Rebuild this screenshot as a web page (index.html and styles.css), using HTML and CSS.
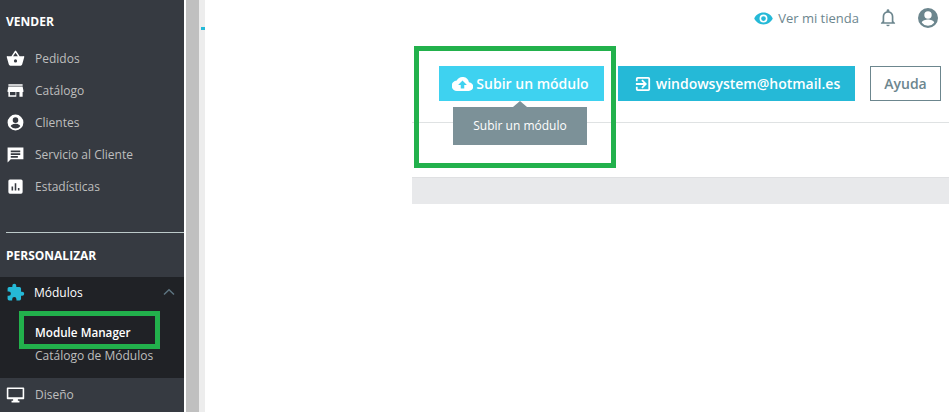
FILE: index.html
```html
<!DOCTYPE html>
<html lang="es">
<head>
<meta charset="utf-8">
<title>Module Manager</title>
<link rel="stylesheet" href="styles.css">
</head>
<body>
<div class="app">
  <aside class="sidebar">
    <h2 class="section-title first">VENDER</h2>
    <ul class="menu">
      <li class="menu-item"><svg class="icon" viewBox="0 0 24 24"><path d="M17.2 9 12.9 2.600a1 1 0 0 0-1.700 0L6.800 9H2a1 1 0 0 0-1 1.300l2.600 9.300A2 2 0 0 0 5.500 21h13a2 2 0 0 0 1.900-1.400l2.600-9.300A1 1 0 0 0 22 9zM9 9l3-4.400L15 9zm3 8a2 2 0 1 1 0-4 2 2 0 0 1 0 4z"/></svg><span>Pedidos</span></li>
      <li class="menu-item"><svg class="icon" viewBox="0 0 24 24"><path d="M21 4H3v2h18zM22 14v-2l-1-5H3l-1 5v2h1v6h10v-6h4v6h4v-6zM12 18H5v-4h7z"/></svg><span>Catálogo</span></li>
      <li class="menu-item"><svg class="icon" viewBox="0 0 24 24"><path d="M12 2a10 10 0 1 0 0 20 10 10 0 0 0 0-20zm0 3.500a3.500 3.500 0 1 1 0 7 3.500 3.500 0 0 1 0-7zm0 14.200a7.700 7.700 0 0 1-6-2.900c0-2 4-3.100 6-3.100s6 1.100 6 3.100a7.700 7.700 0 0 1-6 2.900z"/></svg><span>Clientes</span></li>
      <li class="menu-item"><svg class="icon" viewBox="0 0 24 24"><path d="M22 3H2v19l4-4h16zM6 7h12v2H6zm0 3.500h12v2H6zM15 16H6v-2h9z" fill-rule="evenodd"/></svg><span>Servicio al Cliente</span></li>
      <li class="menu-item"><svg class="icon" viewBox="0 0 24 24"><path d="M19 3H5a2 2 0 0 0-2 2v14a2 2 0 0 0 2 2h14a2 2 0 0 0 2-2V5a2 2 0 0 0-2-2zM9 17H7v-5h2zm4 0h-2V8h2zm4 0h-2v-3h2z"/></svg><span>Estadísticas</span></li>
    </ul>
    <hr class="divider">
    <h2 class="section-title">PERSONALIZAR</h2>
    <div class="open-group">
      <div class="menu-item active">
        <svg class="icon cyan" viewBox="0 0 24 24"><path d="M20.500 11H19V7a2 2 0 0 0-2-2h-4V3.500a2.500 2.500 0 0 0-5 0V5H4a2 2 0 0 0-2 2v3.800h1.500a2.700 2.700 0 0 1 0 5.400H2V20a2 2 0 0 0 2 2h3.800v-1.500a2.700 2.700 0 0 1 5.400 0V22H17a2 2 0 0 0 2-2v-4h1.500a2.500 2.500 0 0 0 0-5z"/></svg>
        <span>Módulos</span>
        <svg class="chevron" viewBox="0 0 12 8"><path d="M1 6.500 6 1.800l5 4.700" fill="none" stroke="currentColor" stroke-width="1.500"/></svg>
      </div>
      <a class="sub-item current">Module Manager</a>
      <a class="sub-item">Catálogo de Módulos</a>
    </div>
    <div class="menu-item last"><svg class="icon" viewBox="0 0 24 24"><path d="M22 3H2a1 1 0 0 0-1 1v13a1 1 0 0 0 1 1h7v2H7v2h10v-2h-2v-2h7a1 1 0 0 0 1-1V4a1 1 0 0 0-1-1zm-1 12.500H3V5h18z"/></svg><span>Diseño</span></div>
  </aside>
  <div class="gutter-light"></div>
  <div class="gutter-gray"></div>
  <div class="gutter-pale"><i class="tick"></i></div>
  <main class="main">
    <header class="topbar">
      <a class="shop-link">
        <svg class="eye" viewBox="0 0 24 16"><path d="M12 .5C6.500.5 2.200 3.700.3 8c1.900 4.300 6.200 7.500 11.700 7.500S21.800 12.300 23.700 8C21.800 3.700 17.500.5 12 .5zm0 12.500a5 5 0 1 1 0-10 5 5 0 0 1 0 10zm0-8a3 3 0 1 0 0 6 3 3 0 0 0 0-6z" fill-rule="evenodd"/></svg>
        <span>Ver mi tienda</span>
      </a>
      <svg class="bell" viewBox="0 0 24 24"><path d="M12 22a2 2 0 0 0 2-2h-4a2 2 0 0 0 2 2zm6.500-6V10.500c0-3.200-1.800-5.800-4.800-6.500v-.7a1.700 1.700 0 0 0-3.400 0V4c-3 .7-4.800 3.300-4.800 6.500V16L3.500 18v1h17v-1zm-2 1h-9v-6.500C7.500 7.800 9.300 5.800 12 5.800s4.500 2 4.500 4.700z"/></svg>
      <svg class="avatar" viewBox="0 0 24 24"><path d="M12 2a10 10 0 1 0 0 20 10 10 0 0 0 0-20zm0 3.300a3.700 3.700 0 1 1 0 7.400 3.700 3.700 0 0 1 0-7.400zm0 14.400a7.800 7.800 0 0 1-6.200-3c0-2.100 4.200-3.200 6.200-3.200s6.200 1.100 6.200 3.200a7.800 7.800 0 0 1-6.200 3z"/></svg>
    </header>
    <section class="page-head">
      <div class="toolbar">
        <button class="btn btn-upload">
          <svg class="btn-cloud" viewBox="0 0 24 18"><path d="M19.400 7A7.500 7.500 0 0 0 5.400 5 6 6 0 0 0 6 17h13a5 5 0 0 0 .4-10zM14 10v4h-4v-4H7l5-5 5 5z" fill-rule="evenodd"/></svg>Subir un módulo
          <span class="tooltip">Subir un módulo</span>
        </button>
        <button class="btn btn-account">
          <svg class="btn-login" viewBox="0 0 18 18"><path d="M3 1h12a2 2 0 0 1 2 2v12a2 2 0 0 1-2 2H3a2 2 0 0 1-2-2v-3h2v3h12V3H3v3H1V3a2 2 0 0 1 2-2zm4.100 11.600L8.500 14l5-5-5-5-1.400 1.400L9.700 8H1v2h8.700z"/></svg>windowsystem@hotmail.es
        </button>
        <button class="btn btn-help">Ayuda</button>
      </div>
    </section>
    <div class="band"></div>
  </main>
</div>
<div class="mark mark-upload"></div>
<div class="mark mark-manager"></div>
</body>
</html>
```
FILE: styles.css
```css
* { box-sizing: border-box; }
html, body { margin: 0; height: 100%; }
body {
  position: relative;
  width: 950px;
  height: 412px;
  overflow: hidden;
  background: #fff;
  font-family: "Open Sans", sans-serif;
}
.app { display: flex; height: 412px; }

.sidebar {
  width: 184px;
  flex: none;
  background: #363a41;
  color: #bebebe;
  font-size: 12px;
}
.section-title {
  margin: 0;
  padding-left: 6px;
  height: 22px;
  line-height: 22px;
  color: #fff;
  font-size: 12px;
  font-weight: 700;
}
.section-title.first { margin-top: 11px; }
.menu { list-style: none; margin: 9px 0 0; padding: 0; }
.menu-item {
  display: flex;
  align-items: center;
  height: 32px;
  padding-left: 6px;
}
.menu-item span { margin-left: 10px; }
.icon { width: 19px; height: 19px; flex: none; fill: #fff; }
.icon.cyan { fill: #25b9d7; }
.divider {
  margin: 30px 0 0 6px;
  border: 0;
  border-top: 1px solid #bcc9c9;
  height: 1px;
}
.section-title:not(.first) { margin-top: 12px; }
.open-group {
  margin-top: 10px;
  height: 101px;
  background: #202226;
}
.menu-item.active { color: #fff; padding-bottom: 2px; }
.menu-item.active span { margin-left: 9px; }
.chevron { width: 12px; height: 8px; margin-left: auto; margin-right: 9px; color: #5d7480; }
.sub-item {
  display: block;
  height: 23px;
  line-height: 23px;
  padding-left: 35px;
}
.sub-item.current {
  margin-top: 11px;
  height: 24px;
  line-height: 24px;
  color: #fff;
  font-size: 11.700px;
  font-weight: 600;
}

.gutter-light { width: 2px; background: #fff; flex: none; }
.gutter-gray { width: 13px; background: #c0c0c0; flex: none; }
.gutter-pale { width: 6px; background: #ededed; flex: none; position: relative; }
.tick { position: absolute; left: 2px; top: 27px; width: 4px; height: 3px; background: #25b9d7; }

.main { flex: 1; min-width: 0; display: flex; flex-direction: column; padding-right: 1px; }
.topbar {
  height: 36px;
  display: flex;
  align-items: center;
  justify-content: flex-end;
  color: #6c868e;
  padding-right: 9px;
}
.shop-link { display: flex; align-items: center; font-size: 13px; margin-right: 19px; }
.shop-link span { margin-left: 5px; }
.eye { width: 19px; height: 13px; fill: #25b9d7; }
.bell { width: 20px; height: 20px; fill: #6c868e; margin-right: 18px; }
.avatar { width: 24px; height: 24px; fill: #6c868e; }

.page-head {
  margin: 0 0 0 207px;
  height: 87px;
  border-bottom: 1px solid #dfe2e3;
  padding: 30px 8px 0 27px;
}
.toolbar { display: flex; gap: 14px; }
.btn {
  height: 35px;
  border: 0;
  padding: 0;
  color: #fff;
  font: 600 14px "Open Sans", sans-serif;
  display: flex;
  align-items: center;
  justify-content: center;
  position: relative;
}
.btn-upload { width: 165px; background: #3ed2f0; padding-right: 2px; }
.btn-account { width: 237px; background: #25b9d7; padding-left: 2px; }
.btn-help {
  width: 71px;
  margin-left: 1px;
  background: #fff;
  border: 1px solid #6c868e;
  color: #6c868e;
}
.btn-cloud { width: 21px; height: 16px; fill: #fff; margin-right: 3px; }
.btn-login { width: 16px; height: 16px; fill: #fff; margin-right: 5px; }

.tooltip {
  position: absolute;
  left: 14px;
  top: 41px;
  width: 134px;
  height: 38px;
  padding-bottom: 1px;
  background: #7c9198;
  color: #fff;
  font-size: 12px;
  font-weight: 400;
  display: flex;
  align-items: center;
  justify-content: center;
}
.tooltip::before {
  content: "";
  position: absolute;
  left: 60px;
  top: -6px;
  border-left: 7px solid transparent;
  border-right: 7px solid transparent;
  border-bottom: 6px solid #7c9198;
}
.band {
  margin: 54px 0 0 207px;
  height: 27px;
  background: #e8e9eb;
  border-top: 1px solid #dfe0e2;
}

.mark {
  position: absolute;
  border: 5px solid #22b14c;
  pointer-events: none;
}
.mark-upload { left: 414px; top: 46px; width: 202px; height: 122px; }
.mark-manager { left: 19px; top: 311px; width: 141px; height: 38px; }
```
